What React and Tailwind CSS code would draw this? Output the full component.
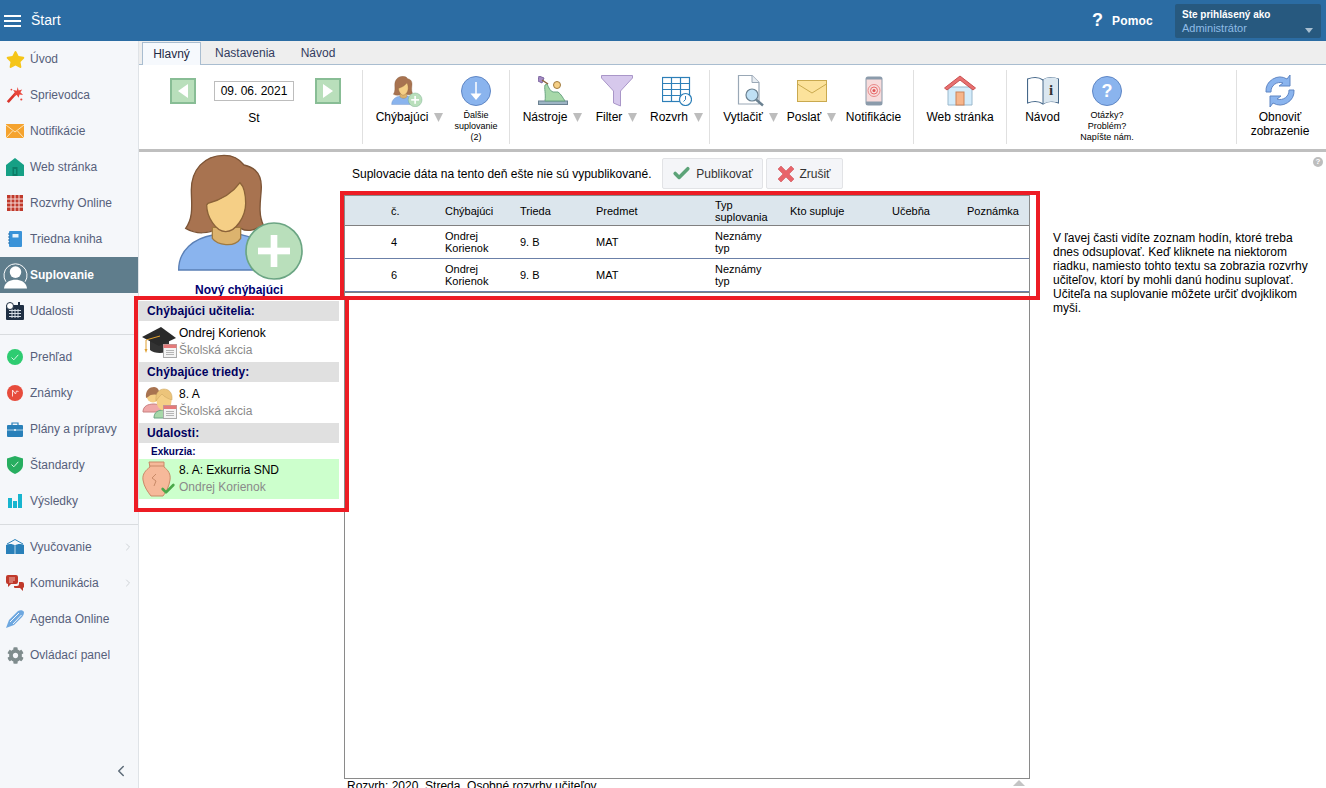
import React from 'react';
import { FaStar, FaCog } from 'react-icons/fa';
import { ChevronLeft, ChevronRight, Check } from 'lucide-react';

const font = { fontFamily: '"Liberation Sans", Arial, sans-serif' };

function Person({ className, plus = true }) {
  return (
    <svg viewBox="126 12 390 378" className={className}>
      <path d="M134 360C134 300 180 265 237 255C250 285 300 290 318 253C370 262 420 300 420 360Z" fill="#8ab4ee" stroke="#5a7fb5" strokeWidth="4" />
      <path d="M270 16C210 16 172 60 172 120C172 160 180 200 155 235C190 255 225 250 250 235L320 235C345 250 370 235 388 225C370 190 382 140 382 110C382 60 350 50 330 45C315 25 295 16 270 16Z" fill="#a87350" stroke="#7c5436" strokeWidth="4" />
      <path d="M235 232L235 265C250 285 300 295 320 265L320 232Z" fill="#dcb36e" stroke="#a07a3f" strokeWidth="4" />
      <path d="M222 160C260 150 295 130 318 98C330 110 335 130 335 160C335 200 305 245 275 245C245 245 218 200 218 165Z" fill="#f5cf86" stroke="#8b6239" strokeWidth="4" />
      {plus && (
        <>
          <circle cx="420" cy="303" r="84" fill="#b9dfbb" stroke="#6ba583" strokeWidth="5" />
          <rect x="372" y="293" width="96" height="20" fill="#fff" />
          <rect x="410" y="255" width="20" height="96" fill="#fff" />
        </>
      )}
    </svg>
  );
}

function MiniCalendar({ className }) {
  return (
    <svg viewBox="0 0 14 14" className={className}>
      <rect x="0.5" y="0.5" width="13" height="13" fill="#f4f4f4" stroke="#aaa" />
      <rect x="0.5" y="0.5" width="13" height="3.5" fill="#e57a7a" />
      <path d="M3 6.5h8M3 8.5h8M3 10.5h8" stroke="#b5b5b5" />
    </svg>
  );
}

const sideIcons = {
  star: <FaStar className="w-[19px] h-[19px] text-[#f5c518]" />,
  wand: (
    <svg viewBox="0 0 20 20" className="w-[18px] h-[18px]">
      <path d="M2 18L11 8" stroke="#d9342b" strokeWidth="3" />
      <path d="M13 1l1 4 4-1-2 3 3 3-4-.5-1 3.5-2-3-4 1 2-3.5-2-3 4 .8z" fill="#e8473c" />
      <circle cx="17" cy="15" r="1.2" fill="#e8473c" />
      <circle cx="6" cy="4" r="1" fill="#e8473c" />
    </svg>
  ),
  mail: (
    <svg viewBox="0 0 18 14" className="w-[18px] h-[14px]">
      <rect width="18" height="14" fill="#f5a32e" />
      <path d="M0 1l9 7 9-7M0 14l6.5-7M18 14l-6.5-7" stroke="#fde5b8" strokeWidth="1" fill="none" />
    </svg>
  ),
  house: (
    <svg viewBox="0 0 18 18" className="w-[18px] h-[18px]">
      <path d="M9 0L18 7V18H0V7Z" fill="#16a085" />
      <rect x="6.5" y="9" width="5" height="9" fill="#0d7d67" />
      <rect x="8" y="11" width="2" height="5" fill="#16a085" />
    </svg>
  ),
  grid: (
    <svg viewBox="0 0 16 16" className="w-[16px] h-[16px]">
      <rect width="16" height="16" fill="#c0392b" />
      <path d="M0 4h16M0 8h16M0 12h16M4 0v16M8 0v16M12 0v16" stroke="#f6dcd8" strokeWidth="1" />
    </svg>
  ),
  notebook: (
    <svg viewBox="0 0 14 16" className="w-[14px] h-[16px]">
      <rect x="1" width="13" height="16" rx="1" fill="#3a93d8" />
      <rect x="4.5" y="3" width="6" height="3.5" fill="#e8f3fb" />
      <path d="M0 3h2M0 6h2M0 9h2M0 12h2" stroke="#2a6ea6" />
    </svg>
  ),
  suplovanie: (
    <svg viewBox="0 0 26 28" className="w-[25px] h-[28px]">
      <path d="M3 21A12 12 0 1 1 23 21" fill="none" stroke="#fff" strokeWidth="1" />
      <circle cx="13" cy="11" r="6" fill="#fff" />
      <path d="M1 28C2 21 8 19 13 19S24 21 25 28Z" fill="#fff" />
    </svg>
  ),
  events: (
    <svg viewBox="0 0 18 18" className="w-[18px] h-[18px]">
      <rect x="0" y="3" width="18" height="15" rx="1" fill="#1f3044" />
      <path d="M3 8.5h12M3 11.5h12M3 14.5h12M6 7v9M9 7v9M12 7v9" stroke="#d5dde5" strokeWidth="1" />
      <circle cx="4" cy="4" r="3.5" fill="#fff" stroke="#1f3044" />
      <rect x="12" y="0" width="2" height="4" fill="#1f3044" />
    </svg>
  ),
  check: (
    <svg viewBox="0 0 16 16" className="w-[16px] h-[16px]">
      <circle cx="8" cy="8" r="8" fill="#2ecc71" />
      <path d="M4.5 8.5l2.3 2.3 4.5-5" fill="none" stroke="#d9f7e5" strokeWidth="1" />
    </svg>
  ),
  marks: (
    <svg viewBox="0 0 16 16" className="w-[16px] h-[16px]">
      <circle cx="8" cy="8" r="8" fill="#e74c3c" />
      <path d="M5.5 11.5V5l3 4 1-3 2 .5" fill="none" stroke="#fadbd8" strokeWidth="1" />
    </svg>
  ),
  briefcase: (
    <svg viewBox="0 0 16 15" className="w-[16px] h-[15px]">
      <path d="M5 3V1h6v2" fill="none" stroke="#2980b9" strokeWidth="1.2" />
      <rect y="3" width="16" height="12" rx="1" fill="#2980b9" />
      <path d="M0 8h16" stroke="#d2e6f3" strokeWidth="0.8" />
      <rect x="7" y="7" width="2" height="2" fill="#d2e6f3" />
    </svg>
  ),
  shield: (
    <svg viewBox="0 0 16 18" className="w-[16px] h-[18px]">
      <path d="M8 0L16 2.5V9C16 13 12 16.5 8 18C4 16.5 0 13 0 9V2.5Z" fill="#27ae60" />
      <path d="M4.5 8.5l2.3 2.3 4.5-5" fill="none" stroke="#d9f7e5" strokeWidth="1" />
    </svg>
  ),
  bars: (
    <svg viewBox="0 0 14 14" className="w-[14px] h-[14px]">
      <rect y="4" width="4" height="10" fill="#17b5cf" />
      <rect x="5" y="7" width="4" height="7" fill="#17b5cf" />
      <rect x="10" width="4" height="14" fill="#17b5cf" />
    </svg>
  ),
  book: (
    <svg viewBox="0 0 18 16" className="w-[18px] h-[16px]">
      <path d="M1 5L9 .5 17 5" fill="none" stroke="#2980b9" strokeWidth="1" />
      <path d="M0 6C3 4.5 7 5 9 6.5C11 5 15 4.500 18 6V15H0Z" fill="#2980b9" />
      <path d="M9 6.500V15" stroke="#bcd9ec" />
    </svg>
  ),
  chat: (
    <svg viewBox="0 0 18 16" className="w-[18px] h-[16px]">
      <path d="M2 0h8a2 2 0 0 1 2 2v5a2 2 0 0 1-2 2H5l-3 3V9a2 2 0 0 1-2-2V2a2 2 0 0 1 2-2Z" fill="#c0392b" />
      <path d="M3 3h6M3 5h6M3 7h4" stroke="#f5d5d1" strokeWidth="0.8" />
      <path d="M13 7h3a2 2 0 0 1 2 2v3a2 2 0 0 1-1 1v3l-3-3H9a1 1 0 0 1-1-1v-1h3a2 2 0 0 0 2-2Z" fill="#c0392b" />
    </svg>
  ),
  pencil: (
    <svg viewBox="0 0 18 18" className="w-[18px] h-[18px]">
      <path d="M0 18L3 10 12 1C14 0 17 0 18 2C18 4 17 6 16 7L8 15Z" fill="#6ea8e0" />
      <path d="M4 12L13 3M7 14L15.500 5" stroke="#f5f7fa" strokeWidth="1" />
    </svg>
  ),
  gear: <FaCog className="w-[17px] h-[17px] text-[#7f8c8d]" />,
};

const groups = [
  [
    { icon: 'star', label: 'Úvod' },
    { icon: 'wand', label: 'Sprievodca' },
    { icon: 'mail', label: 'Notifikácie' },
    { icon: 'house', label: 'Web stránka' },
    { icon: 'grid', label: 'Rozvrhy Online' },
    { icon: 'notebook', label: 'Triedna kniha' },
    { icon: 'suplovanie', label: 'Suplovanie', active: true },
    { icon: 'events', label: 'Udalosti' },
  ],
  [
    { icon: 'check', label: 'Prehľad' },
    { icon: 'marks', label: 'Známky' },
    { icon: 'briefcase', label: 'Plány a prípravy' },
    { icon: 'shield', label: 'Štandardy' },
    { icon: 'bars', label: 'Výsledky' },
  ],
  [
    { icon: 'book', label: 'Vyučovanie', more: true },
    { icon: 'chat', label: 'Komunikácia', more: true },
    { icon: 'pencil', label: 'Agenda Online' },
    { icon: 'gear', label: 'Ovládací panel' },
  ],
];

function Sidebar() {
  return (
    <aside className="w-[139px] shrink-0 bg-[#f5f7fa] border-r border-[#dfe3e7] flex flex-col">
      {groups.map((items, i) => (
        <div key={i} className={i > 0 ? 'border-t border-[#d9dcdf] pt-[4px] mt-[5px]' : ''}>
          {items.map((it) => (
            <div
              key={it.label}
              className={
                'h-[36px] flex items-center text-[12px] relative ' +
                (it.active ? 'bg-[#5f7d8c] text-white font-bold' : 'text-[#56607a]')
              }
            >
              <span className="w-[30px] shrink-0 flex items-center justify-center">{sideIcons[it.icon]}</span>
              <span>{it.label}</span>
              {it.more && <ChevronRight className="absolute left-[122px] w-[12px] h-[12px] text-[#cfd3d7]" />}
            </div>
          ))}
        </div>
      ))}
      <div className="mt-auto h-[32px] flex items-center justify-end pr-[8px] pb-[2px]">
        <ChevronLeft className="w-[18px] h-[18px] text-[#5d6b78]" />
      </div>
    </aside>
  );
}

function Arrow() {
  return (
    <svg viewBox="0 0 9 9" className="w-[9px] h-[9px] ml-[6px] shrink-0">
      <path d="M0 0H9L4.500 9Z" fill="#bdbdbd" />
    </svg>
  );
}

function ToolButton({ icon, label, width, arrow, small }) {
  return (
    <div className={'flex flex-col items-center shrink-0 pt-[5px] ' + width}>
      <div className="h-[32px] flex items-center justify-center">{icon}</div>
      {small ? (
        <div className="mt-[3px] text-[9px] leading-[11px] text-center text-black">{label}</div>
      ) : (
        <div className="mt-[3px] flex items-center text-[12px] leading-[14px] text-center text-black whitespace-nowrap">
          <span>{label}</span>
          {arrow && <Arrow />}
        </div>
      )}
    </div>
  );
}

const ic = {
  next: (
    <svg viewBox="0 0 30 30" className="w-[30px] h-[30px]">
      <circle cx="15" cy="15" r="14.500" fill="#8ab4ee" stroke="#5f86c4" />
      <path d="M15 6V20" stroke="#fff" strokeWidth="1.500" />
      <path d="M9.500 17.500L15 24L20.500 17.500Z" fill="#fff" />
    </svg>
  ),
  tools: (
    <svg viewBox="0 0 30 30" className="w-[30px] h-[30px]">
      <rect x="0.500" y="25" width="29" height="3.500" fill="#9db4c4" stroke="#6b8191" />
      <path d="M7 25C8 18 6 12 7 9L9 8C11 12 12 15 15 16H20C23 18 25 22 27 25Z" fill="#a7d8a9" stroke="#6ba583" />
      <path d="M1 0L6 2 4 7 0 5Z" fill="#a48bc4" stroke="#7d66a0" />
      <path d="M4 4L10 8" stroke="#8b6239" strokeWidth="1.500" />
      <circle cx="19" cy="9" r="3.500" fill="#f5cf86" stroke="#a07a3f" />
    </svg>
  ),
  filter: (
    <svg viewBox="0 0 32 32" className="w-[32px] h-[32px]">
      <path d="M.5 .5H31.500V3L19.500 16V31L12.500 28V16L.5 3Z" fill="#d6c8ec" stroke="#a996c8" />
    </svg>
  ),
  schedule: (
    <svg viewBox="0 0 30 30" className="w-[30px] h-[30px]">
      <rect x="0.500" y="1.500" width="27" height="24" fill="#fff" stroke="#2d7fb8" strokeWidth="1.200" />
      <path d="M0.500 7.500H27.500M0.500 13.500H27.500M0.500 19.500H27.500M9.500 1.500V25.500M18.500 1.500V25.500" stroke="#2d7fb8" strokeWidth="1.200" />
      <circle cx="23.500" cy="23.500" r="6" fill="#fff" stroke="#2d7fb8" strokeWidth="1.200" />
      <path d="M23.500 20V23.500L21.500 25.500" fill="none" stroke="#2d7fb8" />
    </svg>
  ),
  print: (
    <svg viewBox="0 0 30 32" className="w-[30px] h-[32px]">
      <path d="M2.500 .5H16L23 7.500V29H2.500Z" fill="#fff" stroke="#9aa8b6" strokeWidth="1.200" />
      <path d="M16 .5V7.500H23" fill="#e8edf2" stroke="#9aa8b6" />
      <circle cx="16" cy="20" r="6" fill="#bfe0f5" stroke="#6b8191" strokeWidth="1.200" />
      <path d="M20 24.500L27 30.500" stroke="#6b8191" strokeWidth="2.500" />
    </svg>
  ),
  envelope: (
    <svg viewBox="0 0 30 22" className="w-[30px] h-[22px]">
      <rect x="0.500" y="0.500" width="29" height="21" fill="#fce29b" stroke="#c9a94f" />
      <path d="M.5 4L15 13 29.500 4" fill="none" stroke="#c9a94f" />
    </svg>
  ),
  phone: (
    <svg viewBox="0 0 18 30" className="w-[18px] h-[30px]">
      <rect x="0.500" y="0.500" width="17" height="29" rx="2.500" fill="#8b9bab" />
      <rect x="1.500" y="3.500" width="15" height="22" fill="#f7dcdc" />
      <circle cx="9" cy="14.500" r="6" fill="none" stroke="#e88a8a" />
      <circle cx="9" cy="14.500" r="3.500" fill="none" stroke="#e86a6a" />
      <circle cx="9" cy="14.500" r="1.500" fill="#e05555" />
    </svg>
  ),
  web: (
    <svg viewBox="0 0 32 32" className="w-[32px] h-[32px]">
      <path d="M4 12H28V30H4Z" fill="#d4ecfb" stroke="#9ab8cc" />
      <path d="M.5 13L16 1 31.500 13 29 15 16 5 3 15Z" fill="#e87070" stroke="#c95050" />
      <rect x="12" y="17" width="8" height="13" fill="#f7b58a" stroke="#c9835a" />
    </svg>
  ),
  manual: (
    <svg viewBox="0 0 32 30" className="w-[32px] h-[30px]">
      <path d="M.5 27C6 25 12 25 16 28C20 25 26 25 31.500 27V3C26 1 20 1 16 4C12 1 6 1 .5 3Z" fill="#fff" stroke="#46688a" strokeWidth="1.200" />
      <path d="M16 4C20 1 26 1 31 3V26C26 25 20 25 16 28Z" fill="#dbe7f0" />
      <path d="M16 4V28" stroke="#46688a" />
      <text x="22" y="19" fontSize="15" fontWeight="700" fontFamily="Liberation Serif, serif" fill="#333">i</text>
    </svg>
  ),
  question: (
    <svg viewBox="0 0 30 30" className="w-[30px] h-[30px]">
      <circle cx="15" cy="15" r="14.500" fill="#8ab4ee" stroke="#5f86c4" />
      <text x="15" y="21" fontSize="18" fontWeight="700" textAnchor="middle" fontFamily="Liberation Sans, sans-serif" fill="#fff">?</text>
    </svg>
  ),
  refresh: (
    <svg viewBox="0 0 32 32" className="w-[32px] h-[32px]">
      <path d="M2 17A14 14 0 0 1 23 4L26 0V11H15L19 8A9 9 0 0 0 7 17Z" fill="#8ab4ee" stroke="#5f86c4" />
      <path d="M30 15A14 14 0 0 1 9 28L6 32V21H17L13 24A9 9 0 0 0 25 15Z" fill="#8ab4ee" stroke="#5f86c4" />
    </svg>
  ),
};

function Divider() {
  return <div className="w-px bg-[#e0e0e0] self-stretch shrink-0" />;
}

function DateArrow({ left }) {
  return (
    <div className="w-[26px] h-[26px] bg-[#b9dfbb] border-2 border-[#88bd95] flex items-center justify-center">
      <svg viewBox="0 0 10 14" className="w-[10px] h-[14px]">
        <path d={left ? 'M10 0V14L0 7Z' : 'M0 0V14L10 7Z'} fill="#fff" />
      </svg>
    </div>
  );
}

function Toolbar() {
  return (
    <div className="h-[87px] bg-white border-b-[3px] border-[#bfbfbf] flex py-[5px] shrink-0">
      <div className="w-[223px] shrink-0 flex flex-col pl-[31px] pt-[8px]">
        <div className="flex items-center">
          <DateArrow left />
          <div className="ml-[18px] w-[80px] h-[20px] border border-[#bdbdbd] text-[12px] flex items-center justify-center text-black">09. 06. 2021</div>
          <div className="ml-[21px]"><DateArrow /></div>
        </div>
        <div className="ml-[44px] w-[80px] mt-[5px] text-[12px] text-center text-black">St</div>
      </div>
      <Divider />
      <div className="w-[146px] shrink-0 flex pl-[13px]">
        <ToolButton width="w-[67px]" arrow label="Chýbajúci" icon={<Person className="w-[32px] h-[31px] -ml-[5px]" />} />
        <div className="w-[10px]" />
        <ToolButton width="w-[46px]" small label={<>Ďalšie<br />suplovanie<br />(2)</>} icon={ic.next} />
      </div>
      <Divider />
      <div className="w-[199px] shrink-0 flex pl-[13px]">
        <ToolButton width="w-[59px]" arrow label="Nástroje" icon={ic.tools} />
        <div className="w-[14px]" />
        <ToolButton width="w-[41px]" arrow label="Filter" icon={ic.filter} />
        <div className="w-[13px]" />
        <ToolButton width="w-[53px]" arrow label="Rozvrh" icon={ic.schedule} />
      </div>
      <Divider />
      <div className="w-[203px] shrink-0 flex pl-[13px]">
        <ToolButton width="w-[55px]" arrow label="Vytlačiť" icon={ic.print} />
        <div className="w-[9px]" />
        <ToolButton width="w-[49px]" arrow label="Poslať" icon={ic.envelope} />
        <div className="w-[10px]" />
        <ToolButton width="w-[55px]" label="Notifikácie" icon={ic.phone} />
      </div>
      <Divider />
      <div className="w-[92px] shrink-0 flex justify-center">
        <ToolButton width="w-[68px]" label="Web stránka" icon={ic.web} />
      </div>
      <Divider />
      <div className="w-[229px] shrink-0 flex pl-[18px]">
        <ToolButton width="w-[35px]" label="Návod" icon={ic.manual} />
        <div className="w-[17px]" />
        <ToolButton width="w-[60px]" small label={<>Otázky?<br />Problém?<br />Napíšte nám.</>} icon={ic.question} />
      </div>
      <Divider />
      <div className="w-[86px] shrink-0 flex justify-center">
        <ToolButton width="w-[70px]" label={<>Obnoviť<br />zobrazenie</>} icon={ic.refresh} />
      </div>
    </div>
  );
}

function Heading({ children }) {
  return <div className="h-[20px] bg-[#e0e0e0] pl-[8px] flex items-center text-[12px] font-bold tracking-[0.1px] text-[#00005f]">{children}</div>;
}

function ListRow({ icon, title, sub, className = 'h-[41px]' }) {
  return (
    <div className={'flex items-center ' + className}>
      <div className="w-[40px] shrink-0 flex justify-center relative">{icon}</div>
      <div className="text-[12px] leading-[17px]">
        <div className="text-black">{title}</div>
        <div className="text-[#8a8a8a]">{sub}</div>
      </div>
    </div>
  );
}

const capIcon = (
  <div className="relative w-[34px] h-[34px]">
    <svg viewBox="0 0 34 34" className="w-[34px] h-[34px]">
      <path d="M8 15V25C12 29 24 29 27 25V15Z" fill="#333" />
      <path d="M0 12L19 2 34 13 17 21Z" fill="#2a2a2a" />
      <path d="M18 11L4 15V24" fill="none" stroke="#e0a030" strokeWidth="1" />
      <path d="M2.500 24H5.500L4 28Z" fill="#e0a030" />
    </svg>
    <MiniCalendar className="absolute right-[-1px] bottom-[1px] w-[14px] h-[14px]" />
  </div>
);

const classIcon = (
  <div className="relative w-[34px] h-[34px]">
    <svg viewBox="0 0 34 34" className="w-[34px] h-[34px]">
      <path d="M1 26C1 20 6 18 12 18S20 22 20 26Z" fill="#f0a8a8" stroke="#c98080" />
      <circle cx="11" cy="10" r="6.500" fill="#f5cf86" />
      <path d="M4 12C3 4 8 1 12 1S18 5 17 9C13 8 8 8 6 11Z" fill="#a87350" />
      <path d="M12 32C12 26 16 24 22 24S32 27 32 32Z" fill="#a7d8a9" stroke="#6ba583" />
      <ellipse cx="22" cy="15" rx="7.500" ry="9.500" fill="#f5cf86" />
      <path d="M14 15C13 6 18 3 22 3S31 6 30 14C27 13 22 11 20 8C18 10 16 12 14 15Z" fill="#ecc47a" stroke="#c9a25e" strokeWidth="0.500" />
    </svg>
    <MiniCalendar className="absolute right-[-1px] bottom-[1px] w-[14px] h-[14px]" />
  </div>
);

const vaseIcon = (
  <div className="relative w-[34px] h-[36px]">
    <svg viewBox="0 0 30 36" className="w-[30px] h-[36px]">
      <path d="M7 1H22V6C26 9 29 13 28 19C27 26 24 31 21 35H9C6 31 2 26 1 19C0 13 4 9 8 6Z" fill="#f6b99a" stroke="#c98a68" />
      <path d="M7 5H22M14 13L10 17 14 20 12 25" fill="none" stroke="#c98a68" />
    </svg>
    <Check className="absolute right-0 bottom-0 w-[16px] h-[16px] text-[#4aa84a]" strokeWidth={4} />
  </div>
);

function LeftColumn() {
  return (
    <div className="w-[200px] shrink-0">
      <div className="h-[149px] flex flex-col items-center pt-[2px]">
        <Person className="w-[130px] h-[126px] shrink-0 ml-[4px]" />
        <div className="mt-px text-[12px] font-bold text-[#000070]">Nový chýbajúci</div>
      </div>
      <Heading>Chýbajúci učitelia:</Heading>
      <ListRow icon={capIcon} title="Ondrej Korienok" sub="Školská akcia" />
      <Heading>Chýbajúce triedy:</Heading>
      <ListRow icon={classIcon} title="8. A" sub="Školská akcia" />
      <Heading>Udalosti:</Heading>
      <div className="h-[16px] pl-[12px] flex items-center text-[10px] font-bold text-[#00005f]">Exkurzia:</div>
      <ListRow className="h-[40px] bg-[#ccffcc]" icon={vaseIcon} title="8. A: Exkurria SND" sub="Ondrej Korienok" />
    </div>
  );
}

const columns = 'grid grid-cols-[100px_75px_76px_119px_75px_102px_75px_1fr] items-center text-[11px] leading-[12px] text-black';

const rows = [
  { n: 4 },
  { n: 6 },
];

function SubTable() {
  return (
    <div className="w-[686px] h-[584px] shrink-0 border border-[#8a8a8a] mt-[5px]">
      <div className={columns + ' h-[30px] bg-[#dce6ed] border-b border-[#808080]'}>
        <div className="pl-[46px]">č.</div>
        <div>Chýbajúci</div>
        <div>Trieda</div>
        <div>Predmet</div>
        <div>Typ<br />suplovania</div>
        <div>Kto supluje</div>
        <div>Učebňa</div>
        <div>Poznámka</div>
      </div>
      {rows.map((r) => (
        <div key={r.n} className={columns + ' h-[33px] border-b border-[#6b80a8]'}>
          <div className="pl-[46px]">{r.n}</div>
          <div>Ondrej<br />Korienok</div>
          <div>9. B</div>
          <div>MAT</div>
          <div>Neznámy<br />typ</div>
        </div>
      ))}
      <div className="h-px bg-[#808080]" />
    </div>
  );
}

function ActionButton({ icon, label, width }) {
  return (
    <div className={'h-[31px] bg-[#f4f5f8] border border-[#e2e3e6] rounded-[2px] flex items-center justify-center gap-[5px] text-[12px] text-[#333] ' + width}>
      {icon}
      {label}
    </div>
  );
}

export default function App() {
  return (
    <div className="relative w-[1326px] h-[788px] overflow-hidden bg-white flex flex-col" style={font}>
      <header className="h-[41px] shrink-0 bg-[#2b6ca3] flex items-center text-white">
        <div className="ml-[4px] w-[17px] flex flex-col gap-[3px]">
          <div className="h-[2px] bg-white" />
          <div className="h-[2px] bg-white" />
          <div className="h-[2px] bg-white" />
        </div>
        <div className="ml-[10px] text-[14px]">Štart</div>
        <div className="ml-auto text-[18px] font-bold mr-[9px]">?</div>
        <div className="text-[12px] font-bold tracking-[0.2px] mr-[22px]">Pomoc</div>
        <div className="w-[146px] h-[34px] mr-[5px] bg-[#27597f] rounded-[2px] pl-[7px] relative">
          <div className="text-[10px] font-bold leading-[12px] mt-[5px]">Ste prihlásený ako</div>
          <div className="text-[11px] leading-[13px] mt-px text-[#8fbce6]">Administrátor</div>
          <svg viewBox="0 0 8 5" className="absolute right-[8px] top-[24px] w-[8px] h-[5px]">
            <path d="M0 0H8L4 5Z" fill="#a9bfd0" />
          </svg>
        </div>
      </header>
      <div className="flex flex-1 min-h-0">
        <Sidebar />
        <main className="flex-1 min-w-0 flex flex-col">
          <div className="h-[24px] shrink-0 bg-[#eeeeee] border-b border-[#a9bdd0] flex items-end pl-[3px] text-[12px] text-[#333c60]">
            <div className="w-[59px] h-[23px] bg-[#f6f9fd] border border-b-0 border-[#a9bdd0] flex items-center justify-center -mb-px text-[#1f2a44]">Hlavný</div>
            <div className="w-[84px] h-[23px] flex items-center justify-center ml-[2px]">Nastavenia</div>
            <div className="w-[50px] h-[23px] flex items-center justify-center ml-[6px]">Návod</div>
          </div>
          <Toolbar />
          <div className="flex flex-1 min-h-0 relative">
            <LeftColumn />
            <div className="ml-[5px] w-[686px] shrink-0 flex flex-col">
              <div className="h-[38px] flex items-center pl-[8px] pt-[5px] text-[12px] text-black shrink-0">
                <span className="w-[310px]">Suplovacie dáta na tento deň ešte nie sú vypublikované.</span>
                <ActionButton
                  width="w-[101px]"
                  label="Publikovať"
                  icon={<Check className="w-[19px] h-[19px] text-[#5ca378]" strokeWidth={4.5} />}
                />
                <div className="w-[3px]" />
                <ActionButton
                  width="w-[77px]"
                  label="Zrušiť"
                  icon={
                    <svg viewBox="0 0 16 16" className="w-[16px] h-[16px]">
                      <path d="M3 0L8 5 13 0 16 3 11 8 16 13 13 16 8 11 3 16 0 13 5 8 0 3Z" fill="#e8646a" stroke="#c9474d" strokeWidth="0.500" />
                    </svg>
                  }
                />
              </div>
              <SubTable />
              <div className="text-[12px] leading-[14px] pl-[3px] text-black whitespace-nowrap">Rozvrh: 2020, Streda, Osobné rozvrhy učiteľov</div>
            </div>
            <div className="ml-[23px] w-[262px] pt-[79px] text-[12px] leading-[14px] text-black">
              V ľavej časti vidíte zoznam hodín, ktoré treba dnes odsuplovať. Keď kliknete na niektorom riadku, namiesto tohto textu sa zobrazia rozvrhy učiteľov, ktorí by mohli danú hodinu suplovať. Učiteľa na suplovanie môžete určiť dvojklikom myši.
            </div>
          </div>
        </main>
      </div>
      {/* help bubble + scroll arrow + red marks sit over the page */}
      <div className="absolute left-[1313px] top-[157px] w-[10px] h-[10px] rounded-full bg-[#bdbdbd] text-white text-[8px] font-bold leading-[10px] text-center">?</div>
      <svg viewBox="0 0 14 6" className="absolute left-[1012px] top-[780px] w-[14px] h-[6px]">
        <path d="M7 0L13 6H1Z" fill="#c4c4c4" />
      </svg>
      <div className="absolute left-[340px] top-[191px] w-[700px] h-[109px] border-4 border-[#ed1c24]" />
      <div className="absolute left-[134px] top-[296px] w-[215px] h-[216px] border-4 border-[#ed1c24]" />
    </div>
  );
}
